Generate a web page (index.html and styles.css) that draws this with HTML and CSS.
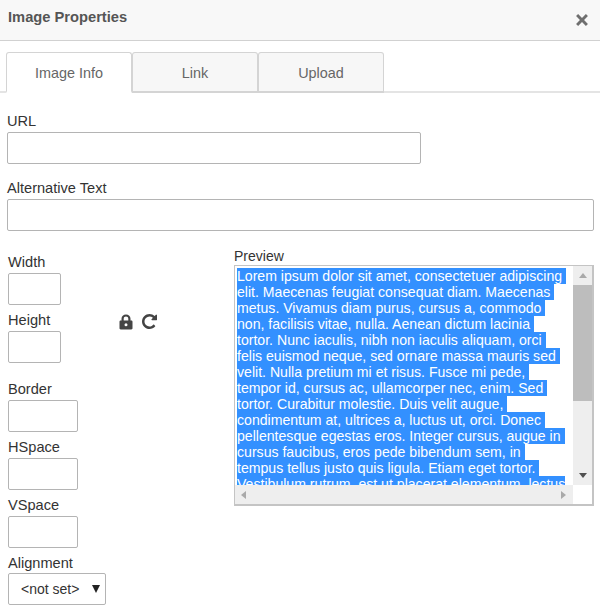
FILE: index.html

```html
<!DOCTYPE html>
<html lang="en">

<head>
    <meta charset="UTF-8">
    <title>Image Properties</title>
    <link rel="stylesheet" href="styles.css">
</head>

<body>
    <div class="dialog">
        <div class="dialog-title">
            <span>Image Properties</span>
            <svg class="close-icon" viewBox="0 0 14 14" width="16" height="16">
                <path d="M1.8 3.6 3.6 1.8 7 5.2l3.4-3.4 1.8 1.8L8.8 7l3.4 3.4-1.8 1.8L7 8.8l-3.4 3.4-1.8-1.8L5.2 7z" />
            </svg>
        </div>

        <div class="tabs">
            <div class="tab active">Image Info</div>
            <div class="tab">Link</div>
            <div class="tab">Upload</div>
        </div>

        <div class="content">
            <div class="field url-field">
                <label>URL</label>
                <input type="text">
            </div>
            <div class="field alt-field">
                <label>Alternative Text</label>
                <input type="text">
            </div>

            <div class="columns">
                <div class="left-col">
                    <div class="size-group">
                        <div class="size-fields">
                            <div class="field small">
                                <label>Width</label>
                                <input type="text">
                            </div>
                            <div class="field small">
                                <label>Height</label>
                                <input type="text">
                            </div>
                        </div>
                        <div class="ratio-icons">
                            <svg viewBox="0 0 14 16" width="14" height="16" class="icon">
                                <path fill-rule="evenodd" d="M2.5 6.500V4.800C2.500 2.200 4.400.5 7 .5s4.500 1.700 4.500 4.300v1.700h.8c.7 0 1.200.5 1.200 1.200v6.600c0 .7-.5 1.200-1.200 1.200H1.700C1 15.500.5 15 .5 14.300V7.700c0-.7.5-1.200 1.200-1.200zM4.700 6.500h4.600V4.800C9.300 3.500 8.300 2.600 7 2.600S4.700 3.500 4.700 4.800zM7 9.300a1.500 1.500 0 1 0 0 3 1.500 1.500 0 0 0 0-3z" />
                            </svg>
                            <svg viewBox="0 0 1536 1536" width="15" height="15" class="icon">
                                <path transform="matrix(1 0 0 -1 0 1408)" d="M1536 1280v-448q0-26-19-45t-45-19h-448q-42 0-59 40-17 39 14 69l138 138q-148 137-349 137-104 0-198.500-40.500t-163.500-109.500-109.500-163.500-40.500-198.500 40.500-198.500 109.500-163.500 163.500-109.500 198.500-40.500q119 0 225 52t179 147q7 10 23 12 15 0 25-9l137-138q9-8 9.500-20.500t-7.500-22.500q-109-132-264-204.500t-327-72.500q-156 0-298 61t-245 164-164 245-61 298 61 298 164 245 245 164 298 61q147 0 284.500-55.500t244.500-156.500l130 129q29 31 70 14 39-17 39-59z" />
                            </svg>
                        </div>
                    </div>

                    <div class="field medium border-field">
                        <label>Border</label>
                        <input type="text">
                    </div>
                    <div class="field medium">
                        <label>HSpace</label>
                        <input type="text">
                    </div>
                    <div class="field medium">
                        <label>VSpace</label>
                        <input type="text">
                    </div>
                    <div class="field">
                        <label>Alignment</label>
                        <div class="select">
                            <span>&lt;not set&gt;</span>
                            <span class="select-arrow"></span>
                        </div>
                    </div>
                </div>

                <div class="preview-col">
                    <div class="preview-label">Preview</div>
                    <div class="preview-box">
                        <div class="preview-text"><span class="selected">Lorem ipsum dolor sit amet, consectetuer adipiscing&nbsp;<br>elit. Maecenas feugiat consequat diam. Maecenas&nbsp;<br>metus. Vivamus diam purus, cursus a, commodo&nbsp;<br>non, facilisis vitae, nulla. Aenean dictum lacinia&nbsp;<br>tortor. Nunc iaculis, nibh non iaculis aliquam, orci&nbsp;<br>felis euismod neque, sed ornare massa mauris sed&nbsp;<br>velit. Nulla pretium mi et risus. Fusce mi pede,&nbsp;<br>tempor id, cursus ac, ullamcorper nec, enim. Sed&nbsp;<br>tortor. Curabitur molestie. Duis velit augue,&nbsp;<br>condimentum at, ultrices a, luctus ut, orci. Donec&nbsp;<br>pellentesque egestas eros. Integer cursus, augue in&nbsp;<br>cursus faucibus, eros pede bibendum sem, in&nbsp;<br>tempus tellus justo quis ligula. Etiam eget tortor.&nbsp;<br>Vestibulum rutrum, est ut placerat elementum, lectus</span></div>
                        <div class="vbar">
                            <span class="arrow up"></span>
                            <div class="vthumb"></div>
                            <span class="arrow down"></span>
                        </div>
                        <div class="hbar">
                            <span class="arrow left"></span>
                            <span class="arrow right"></span>
                        </div>
                        <div class="corner"></div>
                    </div>
                </div>
            </div>
        </div>
    </div>
</body>

</html>
```

FILE: styles.css

```css
* {
    box-sizing: border-box;
}

html,
body {
    height: 100%;
}

body {
    margin: 0;
    overflow: hidden;
    background-color: #fff;
    font-family: "Liberation Sans", Arial, sans-serif;
    font-size: 14px;
    color: #333;
}

.dialog-title {
    display: flex;
    justify-content: space-between;
    height: 41px;
    padding: 9px 10px 0 8px;
    background-color: #f8f8f8;
    border-bottom: 1px solid #d1d1d1;
    font-size: 14.7px;
    font-weight: bold;
    color: #555;
}

.close-icon {
    margin-top: 3px;
    fill: #6f6f6f;
}

/* Tabs */
.tabs {
    display: flex;
    height: 52px;
    padding: 11px 0 0 6px;
    border-bottom: 2px solid #e4e4e4;
}

.tab {
    width: 126px;
    height: 41px;
    margin-bottom: -2px;
    padding-top: 12px;
    background-color: #f7f7f7;
    border: 1px solid #d4d4d4;
    border-bottom: 2px solid #d4d4d4;
    border-radius: 3px 3px 0 0;
    text-align: center;
    font-size: 14.4px;
    color: #666;
}

.tab.active {
    background-color: #fff;
    border-bottom-color: #fff;
}

/* Fields */
.content {
    padding: 20px 6px 0 7px;
}

.field label,
.preview-label {
    display: block;
    height: 16px;
    line-height: 16px;
    font-size: 14.6px;
    color: #333;
}

.field input {
    display: block;
    width: 100%;
    height: 32px;
    margin: 3px 0 0;
    padding: 0 4px;
    background-color: #fff;
    border: 1px solid #b4b4b4;
    border-radius: 2px;
    outline: none;
}

.url-field input {
    width: 414px;
}

.alt-field {
    margin-top: 16px;
}

.columns {
    display: flex;
    margin-top: 23px;
}

.left-col {
    width: 227px;
    padding-left: 1px;
}

.size-group {
    display: flex;
}

.size-fields {
    width: 111px;
}

.field.small {
    width: 53px;
    margin-bottom: 7px;
}

.ratio-icons {
    display: flex;
    gap: 9px;
    padding-top: 60px;
}

.icon {
    fill: #444;
}

.field.medium {
    width: 70px;
    margin-bottom: 7px;
}

.border-field {
    margin-top: 11px;
}

.select {
    display: flex;
    justify-content: space-between;
    align-items: center;
    width: 98px;
    height: 32px;
    margin-top: 2px;
    padding: 0 5px 0 12px;
    border: 1px solid #b4b4b4;
    border-radius: 2px;
}

.select-arrow {
    width: 0;
    height: 0;
    border-top: 8px solid #222;
    border-left: 4px solid transparent;
    border-right: 4px solid transparent;
}

/* Preview */
.preview-col {
    width: 360px;
    margin-top: -6px;
}

.preview-label {
    font-size: 14px;
    margin-bottom: 1px;
}

.preview-box {
    display: grid;
    grid-template-columns: minmax(0, 1fr) 19px;
    grid-template-rows: minmax(0, 1fr) 19px;
    width: 360px;
    height: 241px;
    border: 2px solid #c4c4c4;
    border-top-width: 1px;
    border-left-width: 1px;
    overflow: hidden;
}

.preview-text {
    padding: 2px 0 0 2px;
    overflow: hidden;
    font-size: 14.1px;
    line-height: 16px;
    white-space: nowrap;
}

.selected {
    background-color: #3390ff;
    color: #fff;
}

.vbar {
    display: flex;
    flex-direction: column;
    justify-content: space-between;
    align-items: center;
    background-color: #eee;
}

.vthumb {
    flex: none;
    width: 100%;
    height: 116px;
    margin-bottom: 65px;
    background-color: #bdbdbd;
}

.hbar {
    display: flex;
    justify-content: space-between;
    align-items: center;
    padding: 0 7px 0 6px;
    background-color: #eee;
}

.corner {
    background-color: #fff;
}

.arrow {
    flex: none;
    width: 0;
    height: 0;
    border-style: solid;
    border-color: transparent;
}

.arrow.up {
    margin: 7px 0;
    border-width: 0 4px 5px;
    border-bottom-color: #a9a9a9;
}

.arrow.down {
    margin: 7px 0;
    border-width: 5px 4px 0;
    border-top-color: #505050;
}

.arrow.left {
    border-width: 4px 5px 4px 0;
    border-right-color: #a9a9a9;
}

.arrow.right {
    border-width: 4px 0 4px 5px;
    border-left-color: #a9a9a9;
}
```
